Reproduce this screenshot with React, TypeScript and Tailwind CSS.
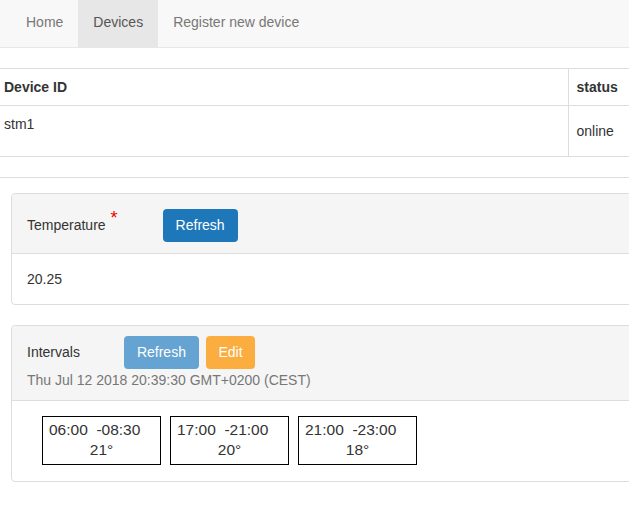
import React from 'react';

const intervals = [
  { from: '06:00', to: '08:30', temp: '21°' },
  { from: '17:00', to: '21:00', temp: '20°' },
  { from: '21:00', to: '23:00', temp: '18°' },
];

function NavBar() {
  return (
    <nav className="h-[48px] bg-[#f8f8f8] border-b border-[#e7e7e7]">
      <ul className="flex h-full pl-[11px] text-[14px]">
        <li className="px-[15px] pb-[2px] flex items-center text-[#777]">Home</li>
        <li className="px-[15px] pb-[2px] flex items-center text-[#555] bg-[#e7e7e7]">Devices</li>
        <li className="px-[15px] pb-[2px] flex items-center text-[#777]">Register new device</li>
      </ul>
    </nav>
  );
}

function DeviceTable() {
  return (
    <div className="mt-[20px]">
      <table className="w-full border-collapse text-[14px] text-[#333]">
        <thead>
          <tr className="h-[37px] border-t border-b border-[#ddd]">
            <th className="text-left font-bold pl-[4px]">Device ID</th>
            <th className="text-left font-bold pl-[8px] w-[61px] border-l border-[#ddd]">status</th>
          </tr>
        </thead>
        <tbody>
          <tr className="h-[51px] border-b border-[#ddd]">
            <td className="align-top pl-[4px] pt-[8px]">stm1</td>
            <td className="pl-[8px] pt-[1px] border-l border-[#ddd]">online</td>
          </tr>
          <tr className="h-[21px] border-b border-[#ddd]">
            <td colSpan={2}></td>
          </tr>
        </tbody>
      </table>
    </div>
  );
}

function Panel({ header, children, className = '' }: { header: React.ReactNode; children: React.ReactNode; className?: string }) {
  return (
    <div className={`ml-[11px] w-[640px] border border-[#ddd] rounded-[4px] bg-white ${className}`}>
      <div className="bg-[#f5f5f5] border-b border-[#ddd] rounded-t-[4px]">{header}</div>
      {children}
    </div>
  );
}

export default function App() {
  return (
    <div className="w-[629px] h-[510px] overflow-hidden bg-white text-[#333]" style={{ fontFamily: '"Liberation Sans", Arial, sans-serif' }}>
      <NavBar />
      <DeviceTable />

      <Panel
        className="mt-[15px]"
        header={
          <div className="h-[59px] flex items-center pl-[15px] pt-[4px] text-[14px]">
            <span className="relative">
              Temperature
              <span className="absolute -right-[12px] -top-[10px] text-[#e00] text-[18px]">*</span>
            </span>
            <button className="ml-[57px] h-[33px] px-[13px] rounded-[4px] bg-[#1e77b9] text-white text-[14px]">Refresh</button>
          </div>
        }
      >
        <div className="h-[50px] flex items-center pl-[15px] text-[14px]">20.25</div>
      </Panel>

      <Panel
        className="mt-[20px]"
        header={
          <div className="h-[74px] pl-[15px] pt-[10px] text-[14px]">
            <div className="flex items-center">
              <span>Intervals</span>
              <button className="ml-[44px] h-[33px] px-[13px] rounded-[4px] bg-[#65a3d2] text-white">Refresh</button>
              <button className="ml-[7px] h-[33px] px-[12.5px] rounded-[4px] bg-[#fbad3f] text-white">Edit</button>
            </div>
            <div className="text-[#777] mt-[1px]">Thu Jul 12 2018 20:39:30 GMT+0200 (CEST)</div>
          </div>
        }
      >
        <div className="h-[80px] flex gap-[9px] pl-[30px] pt-[15px]">
          {intervals.map((iv) => (
            <div key={iv.from} className="w-[119px] h-[49px] border border-black px-[6px] pt-[3px] text-[15.5px] leading-[20px]">
              <div className="whitespace-pre">{`${iv.from}  -${iv.to}`}</div>
              <div className="text-center">{iv.temp}</div>
            </div>
          ))}
        </div>
      </Panel>
    </div>
  );
}
